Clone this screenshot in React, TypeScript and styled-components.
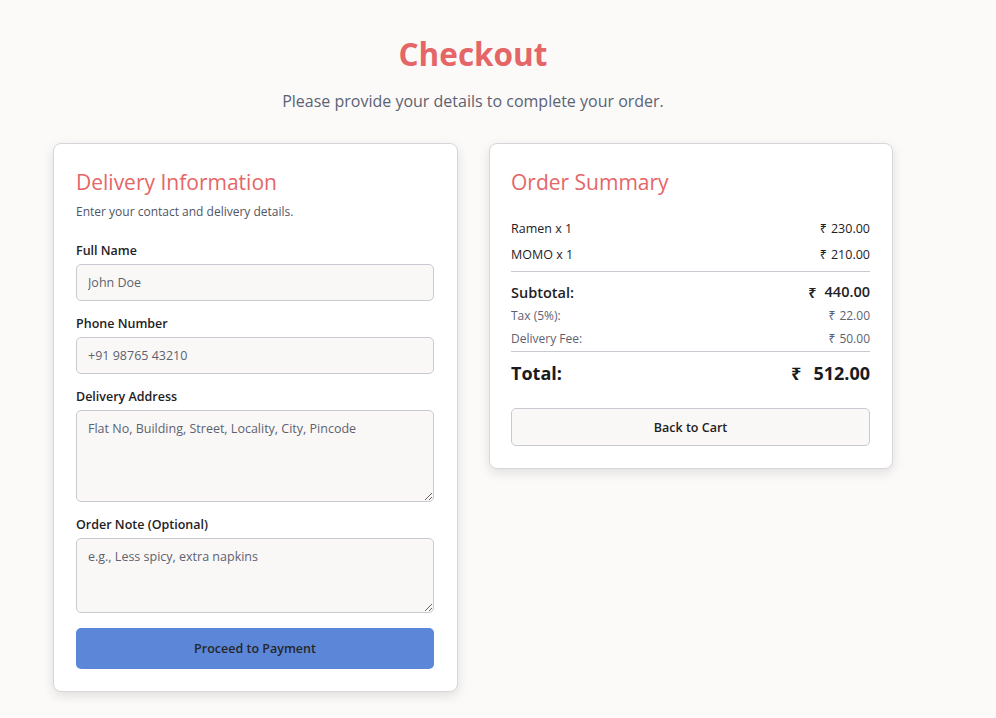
import React from "react";
import styled, { createGlobalStyle } from "styled-components";

const GlobalStyle = createGlobalStyle`
  * { box-sizing: border-box; }
  body {
    margin: 0;
    background: #fbfaf9;
    font-family: "Open Sans", "Noto Sans", sans-serif;
    color: #1f2124;
  }
`;

const Page = styled.div`
  width: 840px;
  margin-left: 53px;
  padding: 34px 0 26px;
`;

const Title = styled.h1`
  margin: 0;
  text-align: center;
  color: #e56667;
  font-size: 31.5px;
  font-weight: 700;
  line-height: 40px;
`;

const Subtitle = styled.p`
  margin: 15px 0 0;
  text-align: center;
  color: #5c6272;
  font-size: 16px;
  line-height: 24px;
`;

const Columns = styled.div`
  margin-top: 30px;
  display: grid;
  grid-template-columns: 405px 404px;
  column-gap: 31px;
  align-items: start;
`;

const Card = styled.section<{ $pl: number; $pr: number }>`
  background: #fff;
  border: 1px solid #d6d6db;
  border-radius: 8px;
  box-shadow: 0 4px 12px rgba(0, 0, 0, 0.11);
  padding: 24px ${(p) => p.$pr}px 22px ${(p) => p.$pl}px;
`;

const CardTitle = styled.h2`
  margin: 0;
  color: #e56667;
  font-size: 21px;
  font-weight: 500;
  line-height: 28px;
`;

const CardHint = styled.p`
  margin: 7px 0 0;
  color: #4f5563;
  font-size: 12px;
  line-height: 18px;
`;

const Form = styled.form`
  margin-top: 21px;
  display: flex;
  flex-direction: column;
`;

const Field = styled.label`
  display: flex;
  flex-direction: column;
  gap: 4px;
  margin-bottom: 14px;
`;

const LabelText = styled.span`
  font-size: 12.5px;
  font-weight: 600;
  line-height: 18px;
  color: #1f2124;
`;

const fieldBase = `
  width: 100%;
  border: 1px solid #c9c9d1;
  border-radius: 5px;
  background: #faf8f6;
  font-family: "Open Sans", "Noto Sans", sans-serif;
  font-size: 12.5px;
  color: #1f2124;
  padding: 0 11px;
  outline: none;
  &::placeholder { color: #5d6270; opacity: 1; }
`;

const Input = styled.input`
  ${fieldBase}
  height: 37px;
`;

const TextArea = styled.textarea<{ $h: number }>`
  ${fieldBase}
  height: ${(p) => p.$h}px;
  padding-top: 9px;
  line-height: 18px;
  resize: vertical;
`;

const PrimaryButton = styled.button`
  margin-top: 1px;
  height: 41px;
  border: none;
  border-radius: 5px;
  background: #5c86d7;
  color: #25272b;
  font-family: inherit;
  font-size: 12.5px;
  font-weight: 600;
  cursor: pointer;
`;

const Lines = styled.div`
  margin-top: 19px;
`;

const Row = styled.div<{ $size: number; $weight: number; $color: string; $h: number }>`
  display: flex;
  justify-content: space-between;
  align-items: center;
  height: ${(p) => p.$h}px;
  font-size: ${(p) => p.$size}px;
  font-weight: ${(p) => p.$weight};
  color: ${(p) => p.$color};
`;

const Divider = styled.hr<{ $mt: number; $mb: number }>`
  margin: ${(p) => p.$mt}px 0 ${(p) => p.$mb}px;
  border: none;
  border-top: 1px solid #c9c9d1;
`;

const Amount = styled.span<{ $gap: number }>`
  display: inline-flex;
  gap: ${(p) => p.$gap}px;
`;

const SecondaryButton = styled.button`
  margin-top: 20px;
  width: 100%;
  height: 38px;
  border: 1px solid #c9c9d1;
  border-radius: 5px;
  background: #faf8f6;
  color: #1f2124;
  font-family: inherit;
  font-size: 12.5px;
  font-weight: 600;
  cursor: pointer;
`;

const Money = ({ value, gap = 4 }: { value: string; gap?: number }) => (
  <Amount $gap={gap}>
    <span>₹</span>
    <span>{value}</span>
  </Amount>
);

export default function App() {
  return (
    <>
      <GlobalStyle />
      <Page>
        <Title>Checkout</Title>
        <Subtitle>Please provide your details to complete your order.</Subtitle>
        <Columns>
          <Card $pl={22} $pr={23}>
            <CardTitle>Delivery Information</CardTitle>
            <CardHint>Enter your contact and delivery details.</CardHint>
            <Form onSubmit={(e) => e.preventDefault()}>
              <Field>
                <LabelText>Full Name</LabelText>
                <Input placeholder="John Doe" />
              </Field>
              <Field>
                <LabelText>Phone Number</LabelText>
                <Input placeholder="+91 98765 43210" />
              </Field>
              <Field>
                <LabelText>Delivery Address</LabelText>
                <TextArea $h={92} placeholder="Flat No, Building, Street, Locality, City, Pincode" />
              </Field>
              <Field>
                <LabelText>Order Note (Optional)</LabelText>
                <TextArea $h={75} placeholder="e.g., Less spicy, extra napkins" />
              </Field>
              <PrimaryButton type="submit">Proceed to Payment</PrimaryButton>
            </Form>
          </Card>
          <Card $pl={21} $pr={22}>
            <CardTitle>Order Summary</CardTitle>
            <Lines>
              <Row $size={12.5} $weight={400} $color="#1f2124" $h={26}>
                <span>Ramen x 1</span>
                <Money value="230.00" />
              </Row>
              <Row $size={12.5} $weight={400} $color="#1f2124" $h={26}>
                <span>MOMO x 1</span>
                <Money value="210.00" />
              </Row>
              <Divider $mt={4} $mb={8} />
              <Row $size={14.5} $weight={600} $color="#1f2124" $h={24}>
                <span>Subtotal:</span>
                <Money value="440.00" gap={8} />
              </Row>
              <Row $size={12} $weight={400} $color="#5c6272" $h={23}>
                <span>Tax (5%):</span>
                <Money value="22.00" />
              </Row>
              <Row $size={12} $weight={400} $color="#5c6272" $h={23}>
                <span>Delivery Fee:</span>
                <Money value="50.00" />
              </Row>
              <Divider $mt={1} $mb={6} />
              <Row $size={18} $weight={700} $color="#1a1b1e" $h={30}>
                <span>Total:</span>
                <Money value="512.00" gap={12} />
              </Row>
            </Lines>
            <SecondaryButton type="button">Back to Cart</SecondaryButton>
          </Card>
        </Columns>
      </Page>
    </>
  );
}
